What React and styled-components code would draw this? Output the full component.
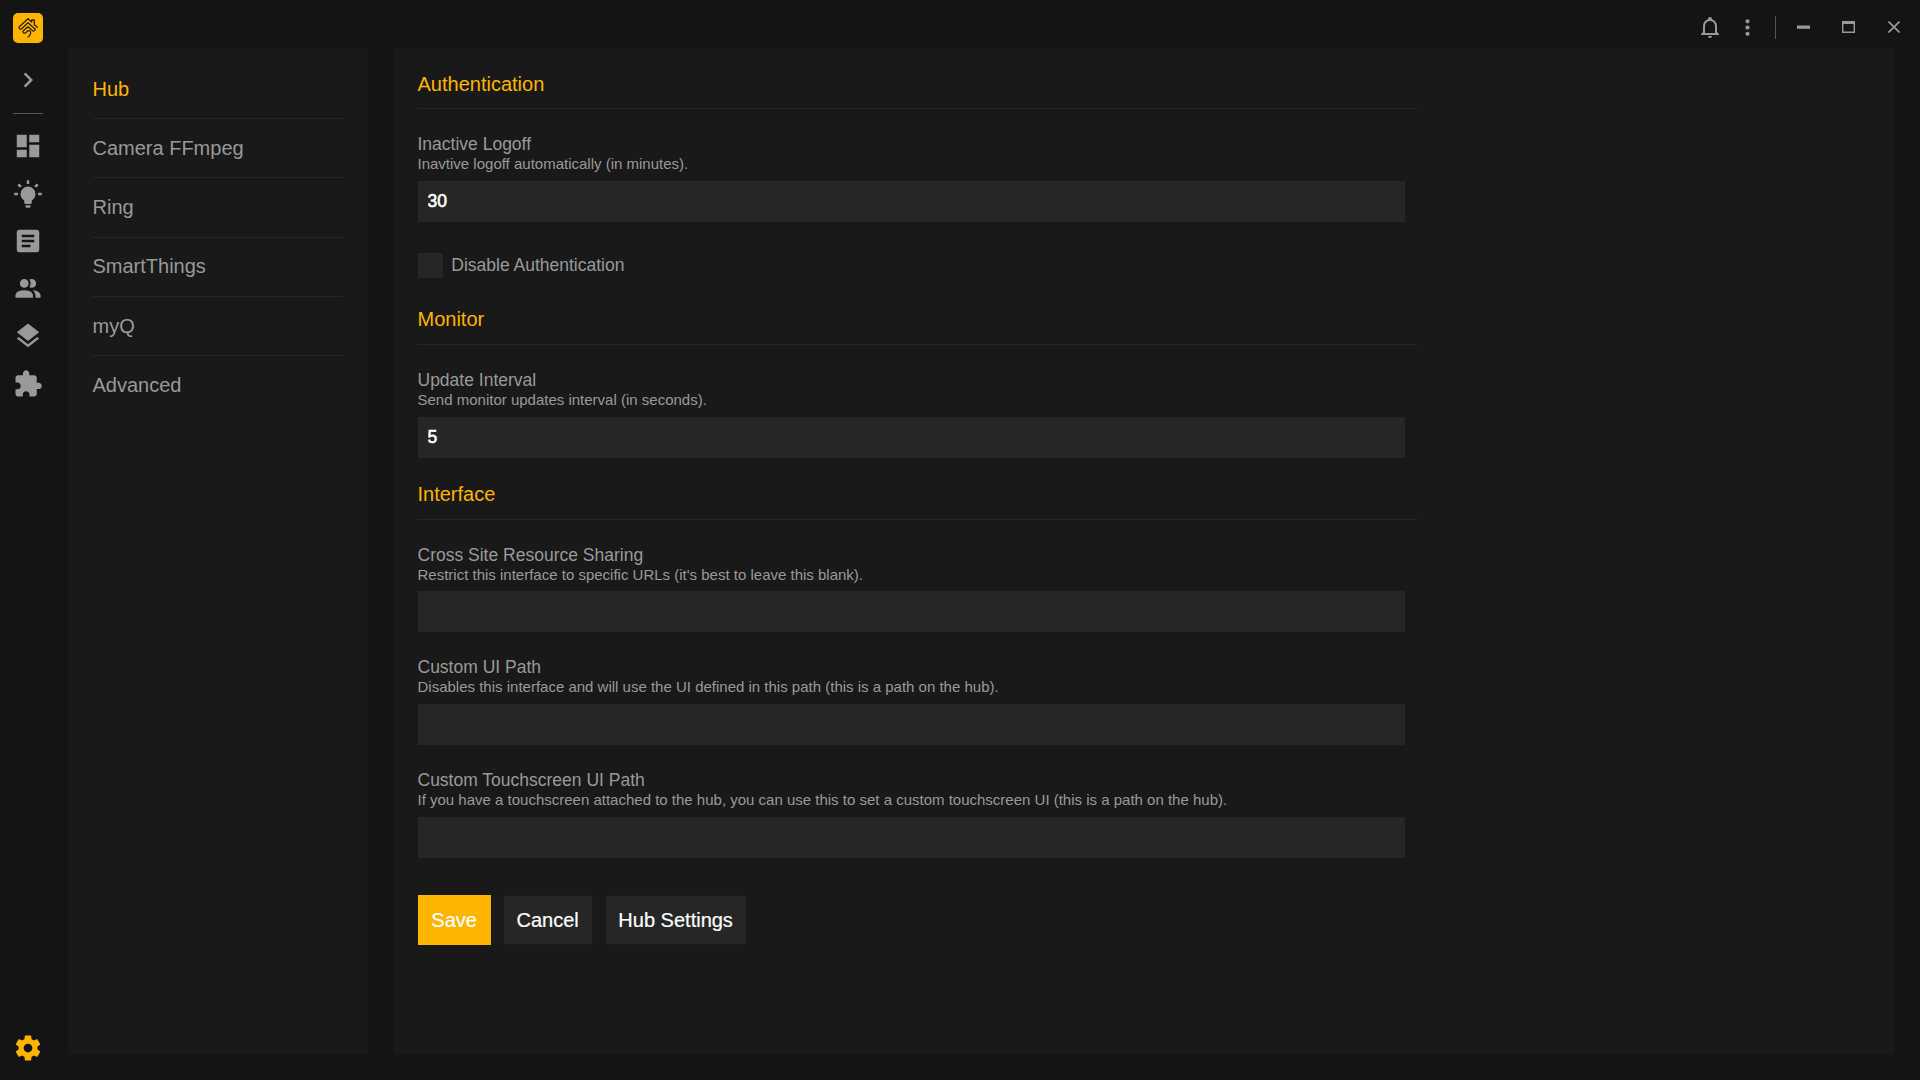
import React from "react";
import styled, { createGlobalStyle } from "styled-components";

const GlobalStyle = createGlobalStyle`
  * { box-sizing: border-box; }
  html, body { margin: 0; padding: 0; background: #141414; }
  body { overflow: hidden; font-family: "Liberation Sans", Arial, sans-serif; color: #999; }
`;

const Shell = styled.div`
  display: flex;
  width: 100vw;
  height: 100vh;
  background: #141414;
`;

const Rail = styled.nav`
  flex: none;
  width: 67.5px;
  padding: 13px 0 17px 13px;
  display: flex;
  flex-direction: column;
  align-items: flex-start;
`;

const Logo = styled.div`
  width: 30px;
  height: 30px;
  border-radius: 5px;
  background: #ffb400;
  svg { display: block; }
`;

const RailIcon = styled.svg`
  display: block;
  flex: none;
  width: 30px;
  height: 30px;
  fill: ${(p) => (p.$active ? "#ffb400" : "#999")};
`;

const Expander = styled.div`
  margin: 22px 0 18px;
`;

const RailDivider = styled.div`
  width: 30px;
  height: 1px;
  background: #555;
`;

const RailList = styled.div`
  display: flex;
  flex-direction: column;
  gap: 17.5px;
  margin-top: 17px;
`;

const RailFooter = styled.div`
  margin-top: auto;
`;

const Page = styled.div`
  flex: 1;
  min-width: 0;
  display: flex;
  flex-direction: column;
  padding: 0 25px 25px 0;
`;

const TitleBar = styled.header`
  flex: none;
  height: 48px;
  display: flex;
  align-items: center;
  justify-content: flex-end;
  padding-top: 6px;
  margin-right: -8.5px;
`;

const BarIcon = styled.svg`
  display: block;
  flex: none;
  fill: #999;
  width: ${(p) => p.$w}px;
  height: ${(p) => p.$h}px;
  margin-right: ${(p) => p.$gap || 0}px;
`;

const BarDivider = styled.div`
  width: 1px;
  height: 23px;
  margin-right: 21px;
  background: #555;
`;

const Columns = styled.div`
  flex: 1;
  min-height: 0;
  display: flex;
  gap: 25px;
`;

const SidePanel = styled.aside`
  flex: none;
  width: 300px;
  padding: 11.75px 25px 0;
  background: #191919;
`;

const SideItem = styled.div`
  height: 59.25px;
  padding-top: 16.9px;
  font-size: 20px;
  line-height: 24px;
  color: ${(p) => (p.$active ? "#ffb400" : "#999")};
  border-bottom: 1px solid #262626;
  &:last-child { border-bottom: 0; }
`;

const MainPanel = styled.main`
  flex: 1;
  min-width: 0;
  padding: 24px 25px 0;
  background: #191919;
`;

const Form = styled.div`
  width: 1000px;
`;

const Section = styled.section`
  margin-bottom: ${(p) => p.$after}px;
`;

const Heading = styled.h2`
  margin: 0 0 25px;
  padding-bottom: ${(p) => p.$pad || 13}px;
  border-bottom: 1px solid #262626;
  font-size: 20px;
  font-weight: 400;
  line-height: 24px;
  color: #ffb400;
`;

const FieldBox = styled.div`
  & + & { margin-top: 25px; }
`;

const Label = styled.div`
  font-size: 17.5px;
  line-height: 20px;
`;

const Hint = styled.div`
  font-size: 15px;
  line-height: 19px;
  margin-bottom: ${(p) => p.$gap}px;
`;

const Input = styled.input`
  display: block;
  width: 987.5px;
  height: 41px;
  margin: 0;
  padding: 0 10px;
  border: 0;
  outline: 0;
  background: #262626;
  color: #fff;
  font: 400 17.5px "Liberation Sans", Arial, sans-serif;
  -webkit-text-stroke: 0.6px #fff;
`;

const CheckRow = styled.div`
  display: flex;
  margin-top: 31px;
  height: 25px;
  gap: 8.75px;
`;

const CheckBox = styled.div`
  width: 25px;
  height: 25px;
  background: #262626;
`;

const CheckLabel = styled.div`
  font-size: 17.5px;
  line-height: 20px;
  padding-top: 2px;
`;

const Buttons = styled.div`
  display: flex;
  gap: 11.9px;
`;

const Button = styled.button`
  height: 50px;
  margin: 0;
  padding: 0 12.85px;
  border: 1px solid ${(p) => (p.$primary ? "#ffb400" : "#1c1c1c")};
  background: ${(p) => (p.$primary ? "#ffb400" : "#262626")};
  color: #fff;
  font: 400 20px/24px "Liberation Sans", Arial, sans-serif;
  -webkit-text-stroke: 0.2px #fff;
`;

const ICONS = {
  chevron: "M10 6L8.59 7.41 13.17 12l-4.58 4.59L10 18l6-6z",
  dashboard: "M3 13h8V3H3v10zm0 8h8v-6H3v6zm10 0h8V11h-8v10zm0-18v6h8V3h-8z",
  bulb: "M12,6A6,6 0 0,1 18,12C18,14.22 16.79,16.16 15,17.2V19A1,1 0 0,1 14,20H10A1,1 0 0,1 9,19V17.2C7.21,16.16 6,14.22 6,12A6,6 0 0,1 12,6M14,21V22A1,1 0 0,1 13,23H11A1,1 0 0,1 10,22V21H14M20,11H23V13H20V11M1,11H4V13H1V11M13,1V4H11V1H13M4.92,3.5L7.05,5.64L5.63,7.05L3.5,4.93L4.92,3.5M16.95,5.63L19.07,3.5L20.5,4.93L18.37,7.05L16.95,5.63Z",
  article: "M19 3H5c-1.1 0-2 .9-2 2v14c0 1.1.9 2 2 2h14c1.1 0 2-.9 2-2V5c0-1.1-.9-2-2-2zm-5 14H7v-2h7v2zm3-4H7v-2h10v2zm0-4H7V7h10v2z",
  people: "M16,17V19H2V17C2,17 2,13 9,13C16,13 16,17 16,17M12.5,7.5A3.5,3.5 0 1,0 9,11A3.5,3.5 0 0,0 12.5,7.5M15.94,13A5.32,5.32 0 0,1 18,17V19H22V17C22,17 22,13.37 15.94,13M15,4A3.39,3.39 0 0,0 13.07,4.59A5,5 0 0,1 13.07,10.41A3.39,3.39 0 0,0 15,11A3.5,3.5 0 0,0 18.5,7.5A3.5,3.5 0 0,0 15,4Z",
  layers: "M11.99 18.54l-7.37-5.73L3 14.07l9 7 9-7-1.63-1.27-7.38 5.74zM12 16l7.36-5.73L21 9l-9-7-9 7 1.63 1.27L12 16z",
  puzzle: "M20.5 11H19V7c0-1.1-.9-2-2-2h-4V3.5C13 2.12 11.88 1 10.5 1S8 2.12 8 3.5V5H4c-1.1 0-1.99.9-1.99 2v3.8H3.5c1.49 0 2.7 1.21 2.7 2.7s-1.21 2.7-2.7 2.7H2V20c0 1.1.9 2 2 2h3.8v-1.5c0-1.49 1.21-2.7 2.7-2.7 1.49 0 2.7 1.21 2.7 2.7V22H17c1.1 0 2-.9 2-2v-4h1.5c1.38 0 2.5-1.12 2.5-2.5S21.88 11 20.5 11z",
  cog: "M12,15.5A3.5,3.5 0 0,1 8.5,12A3.5,3.5 0 0,1 12,8.5A3.5,3.5 0 0,1 15.5,12A3.5,3.5 0 0,1 12,15.5M19.43,12.97C19.47,12.65 19.5,12.33 19.5,12C19.5,11.67 19.47,11.34 19.43,11L21.54,9.37C21.73,9.22 21.78,8.95 21.66,8.73L19.66,5.27C19.54,5.05 19.27,4.96 19.05,5.05L16.56,6.05C16.04,5.66 15.5,5.32 14.87,5.07L14.5,2.42C14.46,2.18 14.25,2 14,2H10C9.75,2 9.54,2.18 9.5,2.42L9.13,5.07C8.5,5.32 7.96,5.66 7.44,6.05L4.95,5.05C4.73,4.96 4.46,5.05 4.34,5.27L2.34,8.73C2.21,8.95 2.27,9.22 2.46,9.37L4.57,11C4.53,11.34 4.5,11.67 4.5,12C4.5,12.33 4.53,12.65 4.57,12.97L2.46,14.63C2.27,14.78 2.21,15.05 2.34,15.27L4.34,18.73C4.46,18.95 4.73,19.03 4.95,18.95L7.44,17.94C7.96,18.34 8.5,18.68 9.13,18.93L9.5,21.58C9.54,21.82 9.75,22 10,22H14C14.25,22 14.46,21.82 14.5,21.58L14.87,18.93C15.5,18.67 16.04,18.34 16.56,17.94L19.05,18.95C19.27,19.03 19.54,18.95 19.66,18.73L21.66,15.27C21.78,15.05 21.73,14.78 21.54,14.63L19.43,12.97Z",
  bell: "M10,21H14A2,2 0 0,1 12,23A2,2 0 0,1 10,21M21,19V20H3V19L5,17V11C5,7.9 7.03,5.17 10,4.29C10,4.19 10,4.1 10,4A2,2 0 0,1 12,2A2,2 0 0,1 14,4C14,4.1 14,4.19 14,4.29C16.97,5.17 19,7.9 19,11V17L21,19M17,11A5,5 0 0,0 12,6A5,5 0 0,0 7,11V18H17V11Z",
  dots: "M12 8c1.1 0 2-.9 2-2s-.9-2-2-2-2 .9-2 2 .9 2 2 2zm0 2c-1.1 0-2 .9-2 2s.9 2 2 2 2-.9 2-2-.9-2-2-2zm0 6c-1.1 0-2 .9-2 2s.9 2 2 2 2-.9 2-2-.9-2-2-2z",
  close: "M13.46,12L19,17.54V19H17.54L12,13.46L6.46,19H5V17.54L10.54,12L5,6.46V5H6.46L12,10.54L17.54,5H19V6.46L13.46,12Z",
};

const RAIL = ["dashboard", "bulb", "article", "people", "layers", "puzzle"];
const SIDE = ["Hub", "Camera FFmpeg", "Ring", "SmartThings", "myQ", "Advanced"];

function Glyph({ name, active }) {
  return (
    <RailIcon viewBox="0 0 24 24" $active={active}>
      <path d={ICONS[name]} />
    </RailIcon>
  );
}

function LogoMark() {
  return (
    <svg width="30" height="30" viewBox="0 0 90 90" fill="none" stroke="#2a200a" strokeWidth="3.8" strokeLinecap="round" strokeLinejoin="round">
      <path d="M73 43L64 35V21H56V27L45 17L18 42Q18 49 25 48L45 29L66 48" />
      <path d="M66 48Q66 55 60 54L45 41L30 54Q30 61 37 60L45 53Q54 52 53 61Q52 67 45 72" />
    </svg>
  );
}

function Field({ label, hint, value = "", gap = 8 }) {
  return (
    <FieldBox>
      <Label>{label}</Label>
      <Hint $gap={gap}>{hint}</Hint>
      <Input defaultValue={value} aria-label={label} />
    </FieldBox>
  );
}

export default function App() {
  return (
    <Shell>
      <GlobalStyle />
      <Rail>
        <Logo><LogoMark /></Logo>
        <Expander><Glyph name="chevron" /></Expander>
        <RailDivider />
        <RailList>
          {RAIL.map((name) => <Glyph key={name} name={name} />)}
        </RailList>
        <RailFooter><Glyph name="cog" active /></RailFooter>
      </Rail>
      <Page>
        <TitleBar>
          <BarIcon viewBox="0 0 24 24" $w={24} $h={24} $gap={13.5}><path d={ICONS.bell} /></BarIcon>
          <BarIcon viewBox="0 0 24 24" $w={25} $h={25} $gap={15}><path d={ICONS.dots} /></BarIcon>
          <BarDivider />
          <BarIcon viewBox="0 0 13 4" $w={13} $h={4} $gap={32}><path d="M0 0.5H13V3.8H0Z" /></BarIcon>
          <BarIcon viewBox="0 0 13 12" $w={13} $h={12} $gap={28.5}>
            <path fillRule="evenodd" d="M0 0H13V12H0ZM1.4 3V10.6H11.6V3Z" />
          </BarIcon>
          <BarIcon viewBox="0 0 24 24" $w={20} $h={20}><path d={ICONS.close} /></BarIcon>
        </TitleBar>
        <Columns>
          <SidePanel>
            {SIDE.map((name, i) => <SideItem key={name} $active={i === 0}>{name}</SideItem>)}
          </SidePanel>
          <MainPanel>
            <Form>
              <Section $after={29}>
                <Heading $pad={12}>Authentication</Heading>
                <Field label="Inactive Logoff" hint="Inavtive logoff automatically (in minutes)." value="30" />
                <CheckRow>
                  <CheckBox />
                  <CheckLabel>Disable Authentication</CheckLabel>
                </CheckRow>
              </Section>
              <Section $after={24}>
                <Heading>Monitor</Heading>
                <Field label="Update Interval" hint="Send monitor updates interval (in seconds)." value="5" />
              </Section>
              <Section $after={37}>
                <Heading>Interface</Heading>
                <Field label="Cross Site Resource Sharing" hint="Restrict this interface to specific URLs (it's best to leave this blank)." gap={7} />
                <Field label="Custom UI Path" hint="Disables this interface and will use the UI defined in this path (this is a path on the hub)." />
                <Field label="Custom Touchscreen UI Path" hint="If you have a touchscreen attached to the hub, you can use this to set a custom touchscreen UI (this is a path on the hub)." />
              </Section>
              <Buttons>
                <Button $primary>Save</Button>
                <Button>Cancel</Button>
                <Button>Hub Settings</Button>
              </Buttons>
            </Form>
          </MainPanel>
        </Columns>
      </Page>
    </Shell>
  );
}
